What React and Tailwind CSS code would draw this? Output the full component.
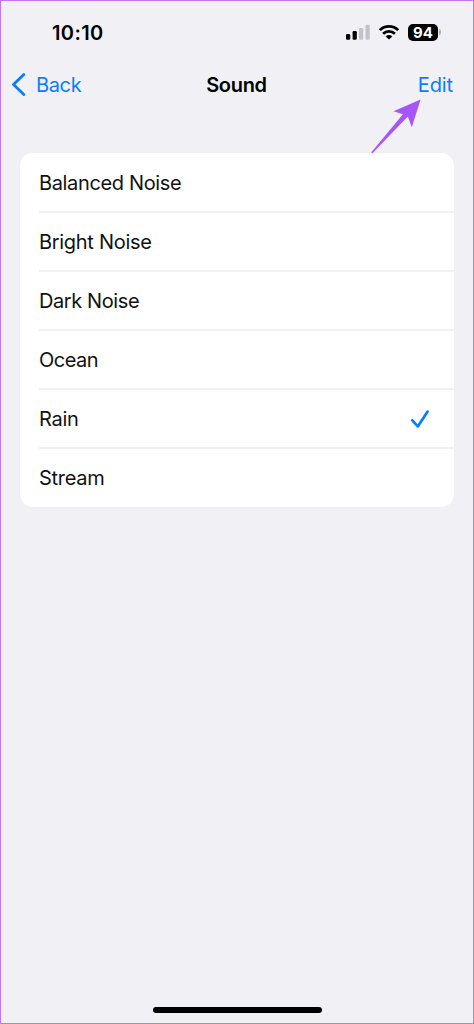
const sounds = [
  { name: 'Balanced Noise', spacing: 'tracking-[-0.36px]' },
  { name: 'Bright Noise', spacing: 'tracking-[-0.3px]' },
  { name: 'Dark Noise', spacing: 'tracking-[-0.4px]' },
  { name: 'Ocean', spacing: 'tracking-[-0.5px]' },
  { name: 'Rain', spacing: 'tracking-[-0.3px]' },
  { name: 'Stream', spacing: 'tracking-[-0.3px]' },
];

function StatusBar() {
  return (
    <div className="flex h-[62px] items-center justify-between pr-[32px] pl-[51px]">
      <time className="pt-px text-[20px] leading-6 font-semibold tracking-[0.4px]">10:10</time>
      <div className="flex items-center gap-2">
        <svg className="h-4 w-6" viewBox="0 0 24 16">
          <rect x="0" y="10" width="4.2" height="5.7" rx="1.2" fill="#000" />
          <rect x="6.6" y="7" width="4.2" height="8.7" rx="1.2" fill="#000" />
          <rect x="13" y="4" width="4.2" height="11.7" rx="1.2" fill="#c3c2c7" />
          <rect x="19.5" y="0.7" width="4.2" height="15" rx="1.2" fill="#c3c2c7" />
        </svg>
        <svg className="h-4 w-[22px]" viewBox="0 0 22 16" fill="none" stroke="#000" strokeWidth="2.7">
          <path d="M1.8 6.1a13.2 13.2 0 0 1 18.4 0" />
          <path d="M5.1 9.7a8.4 8.4 0 0 1 11.8 0" />
          <path d="M11 15.6 7.7 12.4a4.7 4.7 0 0 1 6.6 0Z" fill="#000" stroke="none" />
        </svg>
        <div className="flex items-center gap-px">
          <div className="flex h-[17px] w-[30px] items-center justify-center rounded-[5px] bg-black text-[15px] leading-none font-bold text-white">
            94
          </div>
          <div className="h-[6px] w-[2px] rounded-r-full bg-[#b4b3b8]" />
        </div>
      </div>
    </div>
  );
}

function Header() {
  return (
    <header className="relative grid h-[44px] grid-cols-3 items-center pr-[20px] pl-[10px] text-[20px] leading-6">
      <button className="flex items-center gap-[10px] text-left text-[#087eff]">
        <svg className="h-6 w-[15px]" viewBox="0 0 15 24" fill="none" stroke="currentColor" strokeWidth="2.8" strokeLinecap="round" strokeLinejoin="round">
          <path d="M12.8 1.5 2.5 11.5l10.3 10" />
        </svg>
        <span className="tracking-[-0.35px]">Back</span>
      </button>
      <h1 className="pl-[9px] text-center font-semibold tracking-[-0.3px]">Sound</h1>
      <button className="text-right tracking-[-0.1px] text-[#087eff]">Edit</button>
      <svg className="absolute top-[36px] left-[369px] h-[57px] w-[52px]" viewBox="0 0 52 57" fill="#a855f7">
        <path d="M50.6 0.4 23.5 12.3l9.4 3L1.2 53.6l1 1L37.8 17.6l4 10.6Z" />
      </svg>
    </header>
  );
}

export default function App() {
  return (
    <main className="flex h-[1024px] w-[474px] flex-col border border-[#c474fa] bg-[#f1f0f5] font-[Inter,sans-serif] text-black">
      <StatusBar />
      <Header />
      <ul className="mx-[19px] mt-[46px] overflow-hidden rounded-[13px] bg-white pt-px text-[20px] leading-6 text-[#111]">
        {sounds.map(({ name, spacing }, index) => (
          <li key={name} className="pl-[19px]">
            <div className={`flex items-center justify-between pr-[24px] ${index < sounds.length - 1 ? 'h-[59px] border-b-2 border-[#f1f1f3]' : 'h-[58px]'}`}>
              <span className={spacing}>{name}</span>
              {name === 'Rain' && (
                <svg className="h-5 w-5" viewBox="0 0 20 20" fill="none" stroke="#087eff" strokeWidth="2.7" strokeLinecap="round" strokeLinejoin="round">
                  <path d="m2.3 11.3 5.5 6.1L17.6 2.6" />
                </svg>
              )}
            </div>
          </li>
        ))}
      </ul>
      <div className="mx-auto mt-auto mb-[10px] h-[6px] w-[169px] rounded-full bg-black" />
    </main>
  );
}
